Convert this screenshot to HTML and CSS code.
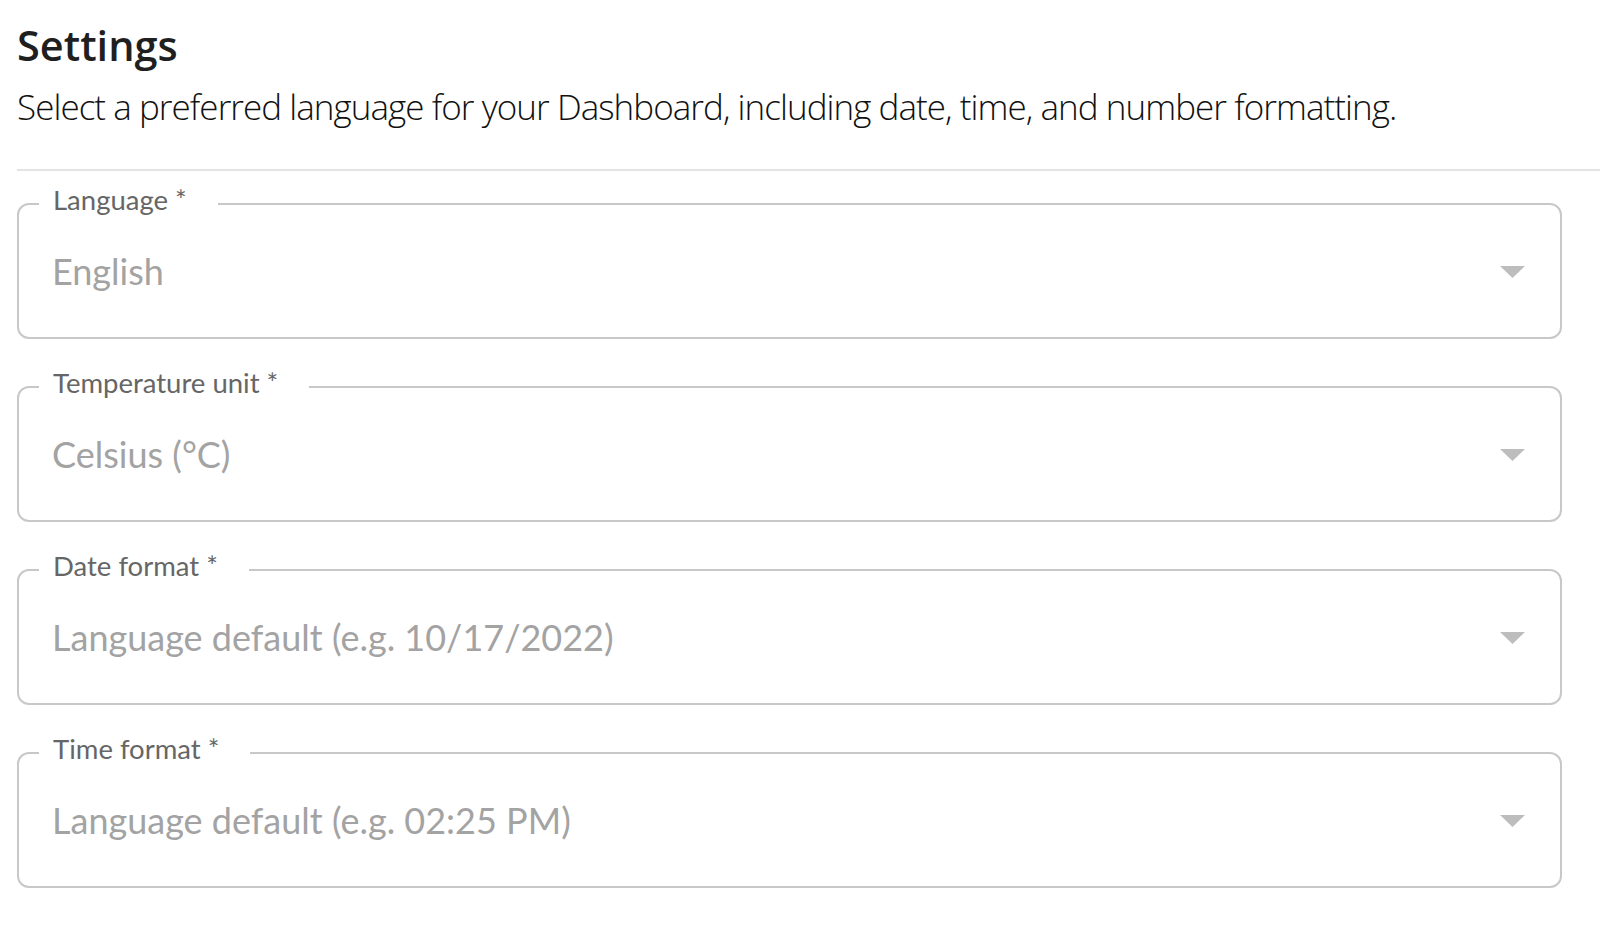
FILE: index.html
```html
<!DOCTYPE html>
<html lang="en">
<head>
<meta charset="utf-8">
<title>Settings</title>
<link rel="stylesheet" href="styles.css">
</head>
<body>
<div class="page">
  <header class="head">
    <h1 class="title">Settings</h1>
    <p class="subtitle">Select a preferred language for your Dashboard, including date, time, and number formatting.</p>
  </header>
  <hr class="divider">
  <form class="form">
    <fieldset class="field">
      <legend class="label">Language *</legend>
      <div class="row">
        <span class="value">English</span>
        <svg class="arrow" width="25" height="12" viewBox="0 0 25 12"><path d="M0 0h25L12.5 12z"/></svg>
      </div>
    </fieldset>
    <fieldset class="field">
      <legend class="label">Temperature unit *</legend>
      <div class="row">
        <span class="value">Celsius (°C)</span>
        <svg class="arrow" width="25" height="12" viewBox="0 0 25 12"><path d="M0 0h25L12.5 12z"/></svg>
      </div>
    </fieldset>
    <fieldset class="field">
      <legend class="label">Date format *</legend>
      <div class="row">
        <span class="value">Language default (e.g. 10/17/2022)</span>
        <svg class="arrow" width="25" height="12" viewBox="0 0 25 12"><path d="M0 0h25L12.5 12z"/></svg>
      </div>
    </fieldset>
    <fieldset class="field">
      <legend class="label">Time format *</legend>
      <div class="row">
        <span class="value">Language default (e.g. 02:25 PM)</span>
        <svg class="arrow" width="25" height="12" viewBox="0 0 25 12"><path d="M0 0h25L12.5 12z"/></svg>
      </div>
    </fieldset>
  </form>
</div>
</body>
</html>
```
FILE: styles.css
```css
html, body {
  margin: 0;
  padding: 0;
  background: #ffffff;
}

.page {
  padding-left: 17px;
}

.head {
  padding-top: 20px;
}

.title {
  margin: 0;
  font-family: "Open Sans", "DejaVu Sans", sans-serif;
  font-stretch: 100%;
  font-weight: 600;
  font-size: 41.5px;
  line-height: 50px;
  color: #1f1f1f;
}

.subtitle {
  margin: 15px 0 0 0;
  font-family: "Open Sans", "DejaVu Sans", sans-serif;
  font-stretch: 100%;
  font-weight: 300;
  font-size: 35px;
  letter-spacing: -0.95px;
  line-height: 44px;
  color: #111111;
}

.divider {
  margin: 40px 0 0 0;
  border: 0;
  height: 2px;
  background: #e3e3e3;
}

.form {
  width: 1545px;
  margin-top: 13px;
}

.field {
  margin: 0 0 28px 0;
  padding: 0;
  border: 2px solid #c8c8c8;
  border-radius: 12px;
  min-width: 0;
}

.label {
  margin-left: 20px;
  padding: 0 31px 8px 14px;
  font-family: Lato, "Open Sans", sans-serif;
  font-size: 27.5px;
  line-height: 32px;
  color: #666666;
}

.row {
  height: 94px;
  padding: 0 35px 19px 33px;
  display: flex;
  align-items: center;
  justify-content: space-between;
}

.value {
  font-family: Lato, "Open Sans", sans-serif;
  font-size: 36px;
  color: #a3a3a3;
}

.arrow {
  fill: #bdbdbd;
  flex: none;
  margin-top: 2px;
}
```
